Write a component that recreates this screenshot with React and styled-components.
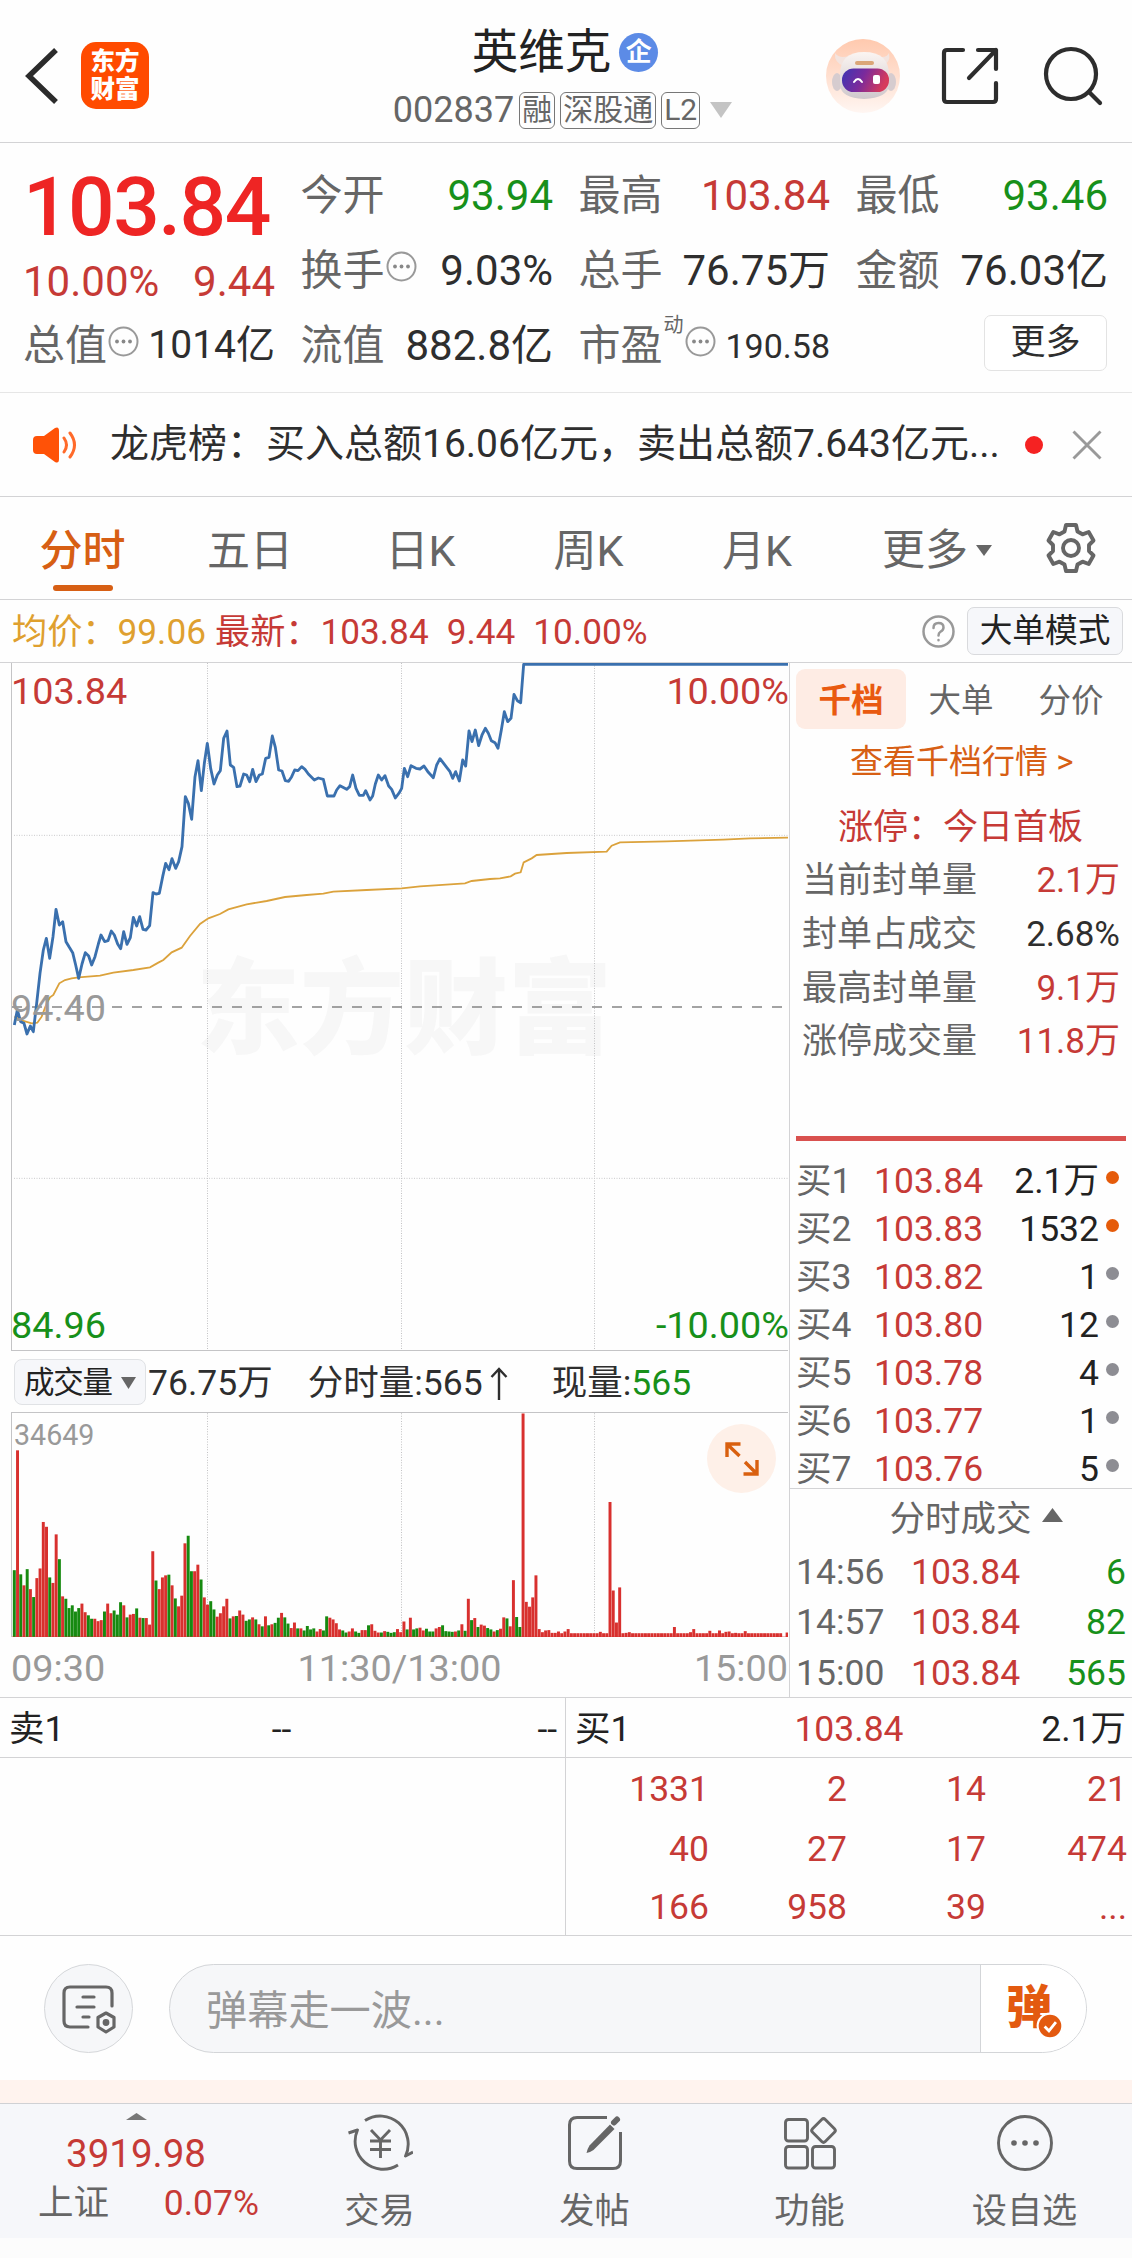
import React from "react";
import styled, { createGlobalStyle } from "styled-components";

const RED = "#c63a36";
const GREEN = "#17901a";
const GRAY = "#666";
const DARK = "#2e2e2e";
const ORANGE = "#d75f14";
const LINE = "#d3d3d5";

const Global = createGlobalStyle`
  * { box-sizing: border-box; }
  body {
    margin: 0;
    background: #fdfdfd;
    font-family: Roboto, "Noto Sans CJK SC", sans-serif;
    color: ${DARK};
  }
`;

const Page = styled.div`
  width: 1132px;
  height: 2258px;
  overflow: hidden;
  background: #fefefe;
  display: flex;
  flex-direction: column;
  font-size: 35.5px;
  line-height: 1;
  white-space: nowrap;
`;

/* ---------- header ---------- */
const Header = styled.header`
  height: 143px;
  border-bottom: 1px solid ${LINE};
  display: grid;
  grid-template-columns: 320px 1fr 320px;
  flex: none;
`;
const HeaderLeft = styled.div`
  display: flex;
  align-items: center;
  gap: 22px;
  padding: 9px 0 0 25px;
`;
const Logo = styled.div`
  width: 68px;
  height: 67px;
  border-radius: 15px;
  background: #ff4b00;
  color: #fff;
  font-weight: 900;
  font-size: 24.5px;
  line-height: 28px;
  text-align: center;
  padding-top: 6px;
  white-space: normal;
  margin-left: 1px;
`;
const HeaderMid = styled.div`
  display: flex;
  flex-direction: column;
  align-items: center;
  padding-top: 24px;
`;
const Title = styled.div`
  display: flex;
  align-items: center;
  gap: 8px;
  height: 56px;
  font-size: 46.5px;
  color: #222;
  padding-right: 2px;
`;
const CorpBadge = styled.span`
  width: 39px;
  height: 39px;
  border-radius: 50%;
  background: #5c8be6;
  color: #fff;
  font-size: 26px;
  font-weight: 700;
  line-height: 38px;
  text-align: center;
`;
const CodeLine = styled.div`
  display: flex;
  align-items: center;
  gap: 5px;
  height: 60px;
  font-size: 36px;
  color: ${GRAY};
  padding-right: 7px;
`;
const Tag = styled.span`
  height: 37px;
  border: 1.5px solid #777;
  border-radius: 6px;
  font-size: 30px;
  line-height: 33px;
  padding: 0 2px;
`;
const HeaderRight = styled.div`
  display: flex;
  align-items: center;
  padding: 9px 0 0 14px;
`;

/* ---------- quote ---------- */
const Quote = styled.section`
  height: 250px;
  border-bottom: 1px solid #e6e6e6;
  padding: 15px 0 0 23px;
  display: grid;
  grid-template-columns: 252px 252.5px 251.5px 252.5px;
  grid-template-rows: 75px 75px 75px;
  column-gap: 25.5px;
  font-size: 42px;
  flex: none;
`;
const PriceBlock = styled.div`
  grid-row: span 2;
`;
const BigPrice = styled.div`
  font-size: 82px;
  line-height: 98px;
  font-weight: 500;
  letter-spacing: -1.5px;
  color: #ee2524;
`;
const Between = styled.div`
  display: flex;
  justify-content: space-between;
  align-items: center;
  line-height: 52px;
  color: ${(p) => p.$c || DARK};
`;
const Cell = styled.div`
  display: flex;
  align-items: center;
  justify-content: space-between;
`;
const CellLabel = styled.span`
  display: flex;
  align-items: center;
  color: ${GRAY};
  gap: 1px;
`;
const CellValue = styled.span`
  color: ${(p) => p.$c || DARK};
  font-size: ${(p) => p.$size || 42}px;
`;
const Sup = styled.span`
  font-size: 20px;
  align-self: flex-start;
  margin-top: -10px;
`;
const MoreButton = styled.button`
  width: 123px;
  height: 56px;
  margin: 0 1px 6px auto;
  background: #fff;
  border: 1.5px solid #e3e3e3;
  border-radius: 7px;
  font: inherit;
  font-size: 35px;
  line-height: 51px;
  padding: 0;
  color: ${DARK};
`;

/* ---------- notice ---------- */
const Notice = styled.section`
  height: 104px;
  border-bottom: 1px solid ${LINE};
  display: flex;
  align-items: center;
  padding: 0 30px 0 33px;
  font-size: 39px;
  flex: none;
`;
const NoticeText = styled.span`
  margin-left: 32px;
  flex: 1;
`;
const RedDot = styled.span`
  width: 18px;
  height: 18px;
  border-radius: 50%;
  background: #f52222;
  margin-right: 29px;
`;

/* ---------- period tabs ---------- */
const Tabs = styled.nav`
  height: 103px;
  border-bottom: 1px solid ${LINE};
  display: flex;
  font-size: 43px;
  color: ${GRAY};
  flex: none;
`;
const Tab = styled.div`
  width: ${(p) => p.$w}px;
  display: flex;
  flex-direction: column;
  align-items: center;
  padding-top: 24px;
  line-height: 60px;
  color: ${(p) => (p.$on ? ORANGE : GRAY)};
  font-weight: ${(p) => (p.$on ? 500 : 400)};
`;
const TabLine = styled.span`
  width: 60px;
  height: 6px;
  margin-top: 4px;
  border-radius: 3px;
  background: ${ORANGE};
`;
const MoreTab = styled.div`
  display: flex;
  align-items: center;
  gap: 8px;
  margin-left: 39px;
  width: 163px;
  height: 106px;
`;

/* ---------- info line ---------- */
const Info = styled.div`
  height: 62px;
  display: flex;
  align-items: center;
  padding: 0 9px 0 12px;
  color: ${RED};
  font-size: 35.2px;
  flex: none;
`;
const InfoText = styled.div`
  padding-top: 3px;
`;
const Avg = styled.span`
  color: #dfa02f;
  margin-right: 9px;
`;
const Gap = styled.span`
  margin-left: 18px;
`;
const ModeButton = styled.button`
  width: 156px;
  height: 48px;
  border: 1.5px solid #d9dadd;
  border-radius: 7px;
  background: #f6f7fa;
  font: inherit;
  font-size: 32.7px;
  line-height: 44px;
  padding: 0;
  color: #222;
  margin-left: 12px;
`;
const Push = styled.span`
  margin-left: auto;
  display: flex;
`;

/* ---------- main ---------- */
const Main = styled.section`
  height: 1035px;
  border-top: 1px solid ${LINE};
  display: flex;
  flex: none;
`;
const ChartCol = styled.div`
  width: 789px;
  padding-left: 11px;
  display: flex;
  flex-direction: column;
`;
const Plot = styled.div`
  position: relative;
  width: 777px;
  height: ${(p) => p.$h}px;
  flex: none;
  border-left: 1px solid #c4c4c6;
  border-top: ${(p) => (p.$top ? "1px solid #c4c4c6" : "0")};
  border-bottom: ${(p) => (p.$top ? "0" : "1px solid #c4c4c6")};
  svg { display: block; }
`;
const PlotLabel = styled.span`
  position: absolute;
  font-size: ${(p) => p.$size || 37.8}px;
  line-height: 40px;
  color: ${(p) => p.$c};
  top: ${(p) => p.$y}px;
  left: ${(p) => (p.$right ? "auto" : (p.$x || -1) + "px")};
  right: ${(p) => (p.$right ? "-1px" : "auto")};
`;
const Watermark = styled.span`
  position: absolute;
  left: 184px;
  top: 283px;
  font-size: 104px;
  line-height: 130px;
  font-weight: 900;
  color: #f7f7f7;
`;
const VolumeBar = styled.div`
  height: 61px;
  flex: none;
  display: flex;
  align-items: center;
  padding-left: 3px;
`;
const VolumeSelect = styled.button`
  width: 132px;
  height: 46px;
  border: 1.5px solid #e0e2e5;
  border-radius: 8px;
  background: #f6f7fa;
  font: inherit;
  font-size: 30.5px;
  letter-spacing: -1.3px;
  line-height: 40px;
  color: #222;
  padding: 2px 9px 0 9px;
  display: flex;
  align-items: center;
  justify-content: space-between;
  margin-right: 2px;
`;
const Field = styled.span`
  margin-left: ${(p) => p.$ml || 0}px;
  padding-top: ${(p) => p.$pt || 0}px;
  display: flex;
  align-items: center;
`;
const Green = styled.span`
  color: ${GREEN};
`;
const ExpandButton = styled.button`
  position: absolute;
  left: 695px;
  top: 11px;
  width: 69px;
  height: 69px;
  border: 0;
  padding: 0;
  border-radius: 50%;
  background: #fef0e8;
  display: flex;
  align-items: center;
  justify-content: center;
`;
const Axis = styled.div`
  width: 777px;
  height: 60px;
  display: flex;
  justify-content: space-between;
  line-height: 62px;
  font-size: 37.8px;
  color: #999;
`;

/* ---------- side panel ---------- */
const Side = styled.aside`
  flex: 1;
  border-left: 1px solid ${LINE};
  display: flex;
  flex-direction: column;
`;
const SideTabs = styled.div`
  display: grid;
  grid-template-columns: 110px 110px 110px;
  margin: 6px 0 0 6px;
`;
const SideTab = styled.div`
  height: 60px;
  line-height: 64px;
  font-size: 32.5px;
  text-align: center;
  border-radius: 9px;
  color: ${(p) => (p.$on ? "#e95a10" : GRAY)};
  font-weight: ${(p) => (p.$on ? 700 : 400)};
  background: ${(p) => (p.$on ? "#feece4" : "transparent")};
`;
const DepthLink = styled.div`
  height: 64px;
  line-height: 65px;
  font-size: 33px;
  color: ${ORANGE};
  padding-left: 60px;
`;
const LimitTitle = styled.div`
  height: 59px;
  line-height: 69px;
  font-size: 35px;
  color: ${RED};
  padding-left: 48px;
`;
const StatRow = styled.div`
  height: 54px;
  display: flex;
  align-items: center;
  justify-content: space-between;
  padding: 4px 12px 0 12px;
  font-size: 35px;
  color: ${GRAY};
`;
const StatValue = styled.span`
  color: ${(p) => (p.$dark ? DARK : RED)};
`;
const SellBar = styled.div`
  height: 6px;
  background: #d9514f;
  margin: 69px 6px 14px 6px;
`;
const BidRow = styled.div`
  height: 48px;
  display: grid;
  grid-template-columns: 78px 110px 1fr 33px;
  align-items: center;
  padding: 4px 0 0 6px;
  color: ${GRAY};
`;
const Price = styled.span`
  color: ${RED};
`;
const Right = styled.span`
  text-align: right;
  color: ${(p) => p.$c || "#222"};
`;
const Dot = styled.span`
  width: 13px;
  height: 13px;
  border-radius: 50%;
  margin: -7px 0 0 7px;
  background: ${(p) => (p.$hot ? "#e55b0a" : "#8d8d93")};
`;
const BidList = styled.div`
  height: 333px;
`;
const TickTitle = styled.div`
  height: 57px;
  border-top: 1px solid ${LINE};
  display: flex;
  align-items: center;
  justify-content: center;
  gap: 10px;
  color: ${GRAY};
  padding: 4px 0 0 30px;
  svg { margin-top: -9px; }
`;
const TickRow = styled.div`
  height: 51px;
  display: grid;
  grid-template-columns: 115px 110px 1fr;
  align-items: center;
  padding: 4px 6px 0 6px;
  color: ${GRAY};
`;

/* ---------- order queue ---------- */
const Queue = styled.section`
  height: 239px;
  border-top: 1px solid ${LINE};
  border-bottom: 1px solid ${LINE};
  display: grid;
  grid-template-columns: 565px 567px;
  grid-template-rows: 237px;
  flex: none;
`;
const QueueSide = styled.div`
  border-left: ${(p) => (p.$line ? `1px solid ${LINE}` : "0")};
`;
const QueueHead = styled.div`
  height: 60px;
  border-bottom: 1px solid ${LINE};
  display: grid;
  grid-template-columns: 1fr 1fr 1fr;
  align-items: center;
  padding: 5px ${(p) => p.$pr || 6}px 0 9px;
  color: #222;
`;
const Center = styled.span`
  text-align: center;
  color: ${(p) => p.$c || "#222"};
  margin-left: -3px;
`;
const QueueGrid = styled.div`
  display: grid;
  grid-template-columns: 143px 138px 139px 141px;
  grid-template-rows: 60px 59.5px 57px;
  align-items: center;
  text-align: right;
  color: ${RED};
  padding-top: 2px;
  height: 177px;
`;

/* ---------- comment bar ---------- */
const Comment = styled.section`
  height: 144px;
  padding: 28px 45px 0 44px;
  display: flex;
  gap: 36px;
  flex: none;
`;
const RoundButton = styled.button`
  width: 89px;
  height: 89px;
  border-radius: 50%;
  border: 1.5px solid #d5d7da;
  background: #f6f7f9;
  padding: 0;
  display: flex;
  align-items: center;
  justify-content: center;
`;
const InputBox = styled.div`
  flex: 1;
  height: 89px;
  border: 1.5px solid #d3d5d8;
  border-radius: 45px;
  background: #f6f7f9;
  overflow: hidden;
  display: flex;
`;
const Placeholder = styled.span`
  flex: 1;
  padding-left: 36px;
  font-size: 41.2px;
  line-height: 93px;
  color: #999;
`;
const Danmu = styled.div`
  position: relative;
  width: 106px;
  border-left: 1.5px solid #d3d5d8;
  background: #fff;
  color: #e35a10;
  font-size: 46px;
  font-weight: 900;
  line-height: 85px;
  padding-left: 25px;
  svg { position: absolute; left: 55px; top: 47px; }
`;
const Band = styled.div`
  height: 24px;
  background: #fff3ee;
  border-bottom: 1px solid #d0d1d4;
  flex: none;
`;

/* ---------- bottom nav ---------- */
const Bottom = styled.footer`
  height: 134px;
  background: #f6f7fa;
  display: grid;
  grid-template-columns: 272px 215px 215px 215px 215px;
  color: ${GRAY};
  font-size: 35.2px;
  flex: none;
`;
const IndexBox = styled.div`
  display: flex;
  flex-direction: column;
  align-items: center;
  padding-top: 9px;
`;
const IndexValue = styled.div`
  font-size: 38.5px;
  color: ${RED};
  line-height: 50px;
  margin-top: 9px;
`;
const IndexRow = styled.div`
  display: flex;
  justify-content: space-between;
  width: 221px;
  line-height: 49px;
  font-size: 35.5px;
  margin-left: 25px;
`;
const NavItem = styled.div`
  display: flex;
  flex-direction: column;
  align-items: center;
  padding-top: 9px;
  line-height: 40px;
  svg { margin-bottom: 18px; display: block; }
`;
const Tail = styled.div`
  flex: 1;
  background: #fcfcfc;
`;

/* ---------- icons ---------- */
const Triangle = ({ w, h, up, fill = "#666" }) => (
  <svg width={w} height={h} viewBox="0 0 10 10" preserveAspectRatio="none">
    <path d={up ? "M0 10L5 0L10 10Z" : "M0 0H10L5 10Z"} fill={fill} />
  </svg>
);

const MoreDots = styled.svg`
  margin-top: -8px;
`;
const Dots = () => (
  <MoreDots width="31" height="31" viewBox="0 0 31 31">
    <circle cx="15.5" cy="15.5" r="14" fill="none" stroke="#999" strokeWidth="2" />
    {[9, 15.5, 22].map((x) => (
      <circle key={x} cx={x} cy="15.5" r="1.9" fill="#888" />
    ))}
  </MoreDots>
);

const Robot = () => (
  <svg width="74" height="74" viewBox="0 0 74 74">
    <defs>
      <linearGradient id="halo" x1="0" y1="0" x2="0" y2="1">
        <stop offset="0" stopColor="#ffc9ae" />
        <stop offset="1" stopColor="#fff6f2" />
      </linearGradient>
      <linearGradient id="visor" x1="0" y1="0" x2="1" y2="0.25">
        <stop offset="0" stopColor="#3b36b4" />
        <stop offset="0.5" stopColor="#7a2a9c" />
        <stop offset="1" stopColor="#d63a5c" />
      </linearGradient>
      <linearGradient id="shell" x1="0" y1="0" x2="0" y2="1">
        <stop offset="0" stopColor="#fbf5f2" />
        <stop offset="1" stopColor="#cfc8cc" />
      </linearGradient>
    </defs>
    <circle cx="37" cy="37" r="37" fill="url(#halo)" />
    <path d="M9 14Q8 24 18 27L23 17Q13 20 9 14ZM63 14Q65 24 56 27L51 17Q60 20 63 14Z" fill="#f3e4df" />
    <ellipse cx="11" cy="43" rx="5" ry="9" fill="#d6cccf" />
    <ellipse cx="65" cy="43" rx="5" ry="9" fill="#d6cccf" />
    <path d="M14 36Q14 13 38 13Q63 13 63 36V46Q62 59 38 60Q15 59 14 46Z" fill="url(#shell)" />
    <rect x="29" y="22" width="19" height="4" rx="2" fill="#dba678" />
    <rect x="16" y="29.500" width="47" height="23.500" rx="11.500" fill="url(#visor)" />
    <path d="M28 43Q32 37 36 43" fill="none" stroke="#fff" strokeWidth="2" strokeLinecap="round" />
    <rect x="47" y="36" width="7" height="9" rx="2" fill="#fff" />
  </svg>
);

const ICON = { fill: "none", stroke: "#2d2d2d", strokeLinecap: "round", strokeLinejoin: "round" };

const HeaderIcon = styled.svg`
  margin-left: ${(p) => p.$ml}px;
`;

const Share = () => (
  <HeaderIcon $ml={41} width="58" height="58" viewBox="0 0 58 58" {...ICON} strokeWidth="4.200">
    <path d="M22 3H6Q3 3 3 6V52Q3 55 6 55H52Q55 55 55 52V36M37 3H55V22M55 3L28 31" />
  </HeaderIcon>
);

const Search = () => (
  <HeaderIcon $ml={44} width="60" height="60" viewBox="0 0 60 60" {...ICON} strokeWidth="4.200">
    <circle cx="28" cy="28" r="25" />
    <path d="M46 46L57 57" />
  </HeaderIcon>
);

const Speaker = () => (
  <svg width="45" height="36" viewBox="0 0 45 36">
    <path d="M4 9H11L22 1Q26 -1 26 4V32Q26 37 22 35L11 27H4Q0 27 0 23V13Q0 9 4 9Z" fill="#ff5207" />
    <path d="M31 11Q36 18 31 25M37 6Q46 18 37 30" fill="none" stroke="#ff6a2a" strokeWidth="3" strokeLinecap="round" />
  </svg>
);

const Close = () => (
  <svg width="30" height="30" viewBox="0 0 30 30">
    <path d="M1.500 1.500L28.500 28.500M28.500 1.500L1.500 28.500" stroke="#999" strokeWidth="2.900" />
  </svg>
);

const Gear = () => (
  <svg width="52" height="52" viewBox="0 0 52 52" fill="none" stroke="#666" strokeWidth="3.900" strokeLinejoin="round">
    <path d="M21 3H31L32.500 9.500L37.500 12.300L43.700 10L48.500 18.500L44 23V29L48.500 33.500L43.700 42L37.500 39.700L32.500 42.500L31 49H21L19.500 42.500L14.500 39.700L8.300 42L3.500 33.500L8 29V23L3.500 18.500L8.300 10L14.500 12.300L19.500 9.500Z" />
    <circle cx="26" cy="26" r="8" />
  </svg>
);

const Help = () => (
  <svg width="33" height="33" viewBox="0 0 33 33" fill="none" stroke="#999" strokeWidth="2.500" strokeLinecap="round">
    <circle cx="16.500" cy="16.500" r="15" />
    <path d="M11.500 13Q11.500 8 16.500 8Q21.500 8 21.500 12.500Q21.500 15 18.500 16.800Q16.500 18 16.500 20.500M16.500 25V25.200" />
  </svg>
);

const Expand = () => (
  <svg width="34" height="34" viewBox="0 0 34 34" fill="none" stroke="#d9600f" strokeWidth="3.400">
    <path d="M2 15V2H15.500M2 2L14.500 14M32 18V32H18.500M32 32L20 20" />
  </svg>
);

const ArrowSvg = styled.svg`
  margin: 0 2px 0 7px;
`;
const UpArrow = () => (
  <ArrowSvg width="18" height="34" viewBox="0 0 18 34" fill="none" stroke="#2e2e2e" strokeWidth="2.400">
    <path d="M9 33V2M1.500 10L9 2L16.500 10" />
  </ArrowSvg>
);

const NoteGear = () => (
  <svg width="56" height="50" viewBox="0 0 56 50" fill="none" stroke="#666" strokeWidth="3.200" strokeLinecap="round">
    <path d="M51 22V9Q51 3 45 3H9Q3 3 3 9V37Q3 43 9 43H27" />
    <path d="M22 13H33M16 23H33M22 33H28" />
    <path d="M45 29L53 33.500V43L45 48L37 43V33.500Z" strokeLinejoin="round" />
    <circle cx="45" cy="38.500" r="1.800" fill="#666" />
  </svg>
);

const CheckBadge = () => (
  <svg width="28" height="28" viewBox="0 0 26 26">
    <circle cx="13" cy="13" r="11.500" fill="#e35a10" stroke="#fff" strokeWidth="2" />
    <path d="M8 13.500L12 17.500L18.500 9.500" fill="none" stroke="#fff" strokeWidth="2.600" />
  </svg>
);

const Trade = () => (
  <svg width="66" height="60" viewBox="0 0 66 60" fill="none" stroke="#666" strokeWidth="2.900">
    <path d="M18 7.500A28 28 0 0 1 58.500 43L66 39M51 52A28 28 0 0 1 10.500 17L1.500 20" strokeLinejoin="round" />
    <path d="M24 17L33.500 27L43 17M33.500 27V45M23 28H44M23 36.500H44" />
  </svg>
);

const Post = () => (
  <svg width="60" height="60" viewBox="0 0 60 60" fill="none" stroke="#666" strokeWidth="3">
    <path d="M42 4.500H12Q4.500 4.500 4.500 12V48Q4.500 55.500 12 55.500H48Q55.500 55.500 55.500 48V19" />
    <path d="M45 11.500L49.500 16L28.500 37Q25 39.500 21.500 40Q22 36.500 24.500 32.500Z" fill="#666" stroke="none" />
    <path d="M49 9.500L52 6.500" strokeWidth="6" strokeLinecap="round" />
  </svg>
);

const Functions = () => (
  <svg width="60" height="60" viewBox="0 0 60 60" fill="none" stroke="#666" strokeWidth="2.900" strokeLinejoin="round">
    <rect x="5.500" y="6.500" width="22" height="21.500" rx="3" />
    <rect x="5.500" y="33.500" width="22" height="21.500" rx="3" />
    <rect x="32.500" y="33.500" width="22" height="21.500" rx="3" />
    <rect x="34.500" y="8.500" width="18" height="18" rx="2.500" transform="rotate(45 43.500 17.500)" />
  </svg>
);

const MoreCircle = () => (
  <svg width="60" height="60" viewBox="0 0 60 60">
    <circle cx="30" cy="30" r="26.500" fill="none" stroke="#666" strokeWidth="2.900" />
    {[19, 30, 41].map((x) => (
      <circle key={x} cx={x} cy="30" r="2.800" fill="#666" />
    ))}
  </svg>
);

/* ---------- chart data ---------- */
const PRICE_LINE =
  "43,1095 52,1050 62,1085 72,1090 81,1122 91,1098 100,1115 110,1030 120,940 130,870 139,835 149,895 159,830 168,748 178,795 188,785 198,845 208,862 218,878 227,915 236,955 246,912 256,878 266,888 275,915 285,890 295,852 303,825 314,845 324,842 334,813 343,825 353,852 362,866 371,815 381,853 391,833 400,772 410,798 419,770 429,808 438,810 449,797 459,698 468,702 478,700 488,650 497,610 507,629 516,596 527,625 536,605 546,560 556,410 565,430 575,478 585,350 594,302 604,392 613,310 622,250 632,325 642,372 652,345 661,332 671,235 681,213 691,315 701,322 711,380 720,378 731,342 740,345 749,365 758,328 768,365 778,345 787,342 797,295 807,292 817,228 826,262 836,330 846,333 856,362 866,364 875,350 884,330 894,332 905,320 915,328 925,342 943,360 955,354 970,358 982,408 1002,408 1010,390 1020,377 1040,388 1049,380 1058,345 1068,385 1078,406 1090,406 1097,392 1110,420 1118,408 1126,372 1135,345 1145,360 1155,347 1166,378 1175,388 1186,414 1198,398 1205,385 1213,325 1223,350 1233,317 1248,325 1260,327 1272,318 1285,337 1300,353 1310,315 1320,296 1340,322 1350,335 1358,355 1367,335 1378,363 1388,300 1397,318 1407,213 1416,245 1426,210 1436,257 1446,225 1456,205 1465,220 1474,242 1485,248 1494,265 1504,210 1513,155 1523,185 1533,175 1542,103 1552,122 1562,128 1571,13 2364,13";

const AVERAGE_LINE =
  "43,1070 70,1083 95,1090 112,1088 125,1070 140,1030 150,1012 160,1005 178,970 195,960 215,955 236,952 300,947 340,938 400,930 450,922 475,908 490,900 515,877 545,863 570,828 600,792 625,775 660,762 685,748 740,733 800,723 855,711 920,705 970,701 1000,695 1100,690 1205,685 1260,679 1395,670 1415,663 1470,657 1500,655 1532,649 1545,641 1562,637 1571,607 1595,595 1610,585 1700,579 1820,575 1835,557 1860,547 2000,544 2170,539 2250,535 2364,533";

/* One entry per minute: g = down, r = up, followed by the bar height. */
const MORNING =
  "g194 r542 g182 r150 g197 r139 g116 r171 r199 r334 r320 g173 r157 r298 g226 r118 g111 g84 g92 g74 g84 r97 r72 g63 g53 r53 r46 r49 g74 r97 r69 g77 g65 g101 r92 g57 r65 r67 g83 r56 g55 r55 r36 r249 g164 r139 r173 r179 g181 r150 g112 r89 r120 r272 g294 g191 r191 r210 g167 r115 r94 g104 g80 r59 r69 r89 r111 g54 r60 g61 r77 r65 g47 g51 r57 g51 r37 g31 r60 g34 r37 g41 g56 r70 g57 g39 r26 r42 g25 r25 g19 g32 g22 g25 r16 r23 g19 g60 r56 r51 r40 r22 g19 g13 r16 r25 g16 g12 r20 r20 g34 r37 r18 r13 g13 r17 g15 g12 g14 r23";
const AFTERNOON =
  "r14 r45 g22 r56 g22 g25 r27 r19 g24 g16 g16 r25 r29 g34 g17 g16 g15 r16 g19 r37 g18 r111 g49 r55 g29 r36 r33 g26 g22 r16 g20 r24 r57 g54 r31 r165 g58 g29 r649 r102 r88 r115 r179 r23 r14 r19 r20 r12 r12 r16 r11 r16 r23 r11 r11 r11 r11 r11 r11 r11 r11 r11 r15 r11 r11 r392 r135 r42 r144 r11 r12 r14 r11 r11 r11 r11 r11 r11 r11 r11 r11 r11 r11 r11 r11 r29 r11 r11 r11 r11 r14 r23 r11 r11 r11 r11 r18 r11 r11 r19 r11 r15 r16 r11 r12 r11 r11 r17 r11 r11 r11 r11 r11 r11 r11 r11 r11 r11 r11 r0 r13";
const VOLUMES = `${MORNING} ${AFTERNOON}`.split(" ").map((v) => ({ up: v[0] === "r", h: +v.slice(1) }));
const PITCH = 9.66;

const GridV = ({ y1, y2 }) =>
  [622.5, 1204.5, 1783.5].map((x) => (
    <line key={x} x1={x} x2={x} y1={y1} y2={y2} stroke="#c2c2c4" strokeWidth="3" strokeDasharray="3 4.5" />
  ));

const ChartSvg = styled.svg`
  position: relative;
`;

const PriceChart = () => (
  <ChartSvg width="776" height="687" viewBox="36 9 2328 2061">
    <GridV y1={9} y2={2070} />
    {[526, 1555].map((y) => (
      <line key={y} x1="42" x2="2364" y1={y} y2={y} stroke="#cacacc" strokeWidth="3" strokeDasharray="3 4.5" />
    ))}
    <line x1="36" x2="2346" y1="1041" y2="1041" stroke="#858585" strokeWidth="5" strokeDasharray="30 30" />
    <polyline points={AVERAGE_LINE} fill="none" stroke="#dba23c" strokeWidth="5.500" />
    <polyline points={PRICE_LINE} fill="none" stroke="#3a70ae" strokeWidth="8.500" strokeLinejoin="round" />
  </ChartSvg>
);

const VolumeChart = () => (
  <svg width="776" height="224" viewBox="36 734.600 2328 650.400" preserveAspectRatio="none">
    <GridV y1={735} y2={1385} />
    {VOLUMES.map((v, i) => (
      <rect
        key={i}
        x={38.5 + i * PITCH}
        y={1385 - v.h}
        width={PITCH - 0.8}
        height={v.h}
        fill={v.up ? "#d8302e" : "#168a10"}
      />
    ))}
    <line x1="36" x2="2364" y1="1383.500" y2="1383.500" stroke="#d8302e" strokeWidth="2" opacity="0.5" />
  </svg>
);

const PERIODS = [
  ["分时", 165],
  ["五日", 170],
  ["日K", 171],
  ["周K", 165],
  ["月K", 172],
];
const STATS = [
  ["当前封单量", "2.1万"],
  ["封单占成交", "2.68%"],
  ["最高封单量", "9.1万"],
  ["涨停成交量", "11.8万"],
];
const BIDS = [
  ["103.84", "2.1万"],
  ["103.83", "1532"],
  ["103.82", "1"],
  ["103.80", "12"],
  ["103.78", "4"],
  ["103.77", "1"],
  ["103.76", "5"],
];
const TICKS = [
  ["14:56", "103.84", "6"],
  ["14:57", "103.84", "82"],
  ["15:00", "103.84", "565"],
];
const ORDERS = ["1331", "2", "14", "21", "40", "27", "17", "474", "166", "958", "39", "..."];
const NAV = [
  ["交易", Trade],
  ["发帖", Post],
  ["功能", Functions],
  ["设自选", MoreCircle],
];

export default function App() {
  return (
    <Page>
      <Global />
      <Header>
        <HeaderLeft>
          <svg width="33" height="56" viewBox="0 0 33 56" fill="none" stroke="#2b2b2b" strokeWidth="5.500">
            <path d="M31 2L4 28L31 54" />
          </svg>
          <Logo>东方<br />财富</Logo>
        </HeaderLeft>
        <HeaderMid>
          <Title>英维克<CorpBadge>企</CorpBadge></Title>
          <CodeLine>
            002837<Tag>融</Tag><Tag>深股通</Tag><Tag>L2</Tag>
            <Field $ml={5}><Triangle w={22} h={16} fill="#c4c4c4" /></Field>
          </CodeLine>
        </HeaderMid>
        <HeaderRight><Robot /><Share /><Search /></HeaderRight>
      </Header>

      <Quote>
        <PriceBlock>
          <BigPrice>103.84</BigPrice>
          <Between $c={RED}><span>10.00%</span><span>9.44</span></Between>
        </PriceBlock>
        <Cell><CellLabel>今开</CellLabel><CellValue $c={GREEN}>93.94</CellValue></Cell>
        <Cell><CellLabel>最高</CellLabel><CellValue $c={RED}>103.84</CellValue></Cell>
        <Cell><CellLabel>最低</CellLabel><CellValue $c={GREEN}>93.46</CellValue></Cell>
        <Cell><CellLabel>换手<Dots /></CellLabel><CellValue>9.03%</CellValue></Cell>
        <Cell><CellLabel>总手</CellLabel><CellValue>76.75万</CellValue></Cell>
        <Cell><CellLabel>金额</CellLabel><CellValue>76.03亿</CellValue></Cell>
        <Cell><CellLabel>总值<Dots /></CellLabel><CellValue $size={39}>1014亿</CellValue></Cell>
        <Cell><CellLabel>流值</CellLabel><CellValue>882.8亿</CellValue></Cell>
        <Cell><CellLabel>市盈<Sup>动</Sup><Dots /></CellLabel><CellValue $size={34}>190.58</CellValue></Cell>
        <Cell><MoreButton>更多</MoreButton></Cell>
      </Quote>

      <Notice>
        <Speaker />
        <NoticeText>龙虎榜：买入总额16.06亿元，卖出总额7.643亿元...</NoticeText>
        <RedDot />
        <Close />
      </Notice>

      <Tabs>
        {PERIODS.map(([t, w], i) => (
          <Tab key={t} $w={w} $on={i === 0}>{t}{i === 0 && <TabLine />}</Tab>
        ))}
        <MoreTab>更多<Triangle w={16} h={11} /></MoreTab>
        <Field><Gear /></Field>
      </Tabs>

      <Info>
        <InfoText>
          <Avg>均价：99.06</Avg>最新：103.84<Gap>9.44</Gap><Gap>10.00%</Gap>
        </InfoText>
        <Push><Help /></Push>
        <ModeButton>大单模式</ModeButton>
      </Info>

      <Main>
        <ChartCol>
          <Plot $h={688}>
            <Watermark>东方财富</Watermark>
            <PriceChart />
            <PlotLabel $c={RED} $y={8}>103.84</PlotLabel>
            <PlotLabel $c={RED} $y={8} $right>10.00%</PlotLabel>
            <PlotLabel $c="#999" $y={325}>94.40</PlotLabel>
            <PlotLabel $c={GREEN} $y={642}>84.96</PlotLabel>
            <PlotLabel $c={GREEN} $y={642} $right>-10.00%</PlotLabel>
          </Plot>
          <VolumeBar>
            <VolumeSelect>成交量<Triangle w={15} h={12} /></VolumeSelect>
            <Field $pt={4}>76.75万</Field>
            <Field $ml={35} $pt={4}>分时量:565<UpArrow /></Field>
            <Field $ml={42} $pt={4}>现量:<Green>565</Green></Field>
          </VolumeBar>
          <Plot $h={225} $top>
            <VolumeChart />
            <PlotLabel $c="#999" $size={28.6} $x={2} $y={2}>34649</PlotLabel>
            <ExpandButton><Expand /></ExpandButton>
          </Plot>
          <Axis><span>09:30</span><span>11:30/13:00</span><span>15:00</span></Axis>
        </ChartCol>

        <Side>
          <SideTabs>
            <SideTab $on>千档</SideTab><SideTab>大单</SideTab><SideTab>分价</SideTab>
          </SideTabs>
          <DepthLink>查看千档行情 &gt;</DepthLink>
          <LimitTitle>涨停：今日首板</LimitTitle>
          {STATS.map(([k, v], i) => (
            <StatRow key={k}>{k}<StatValue $dark={i === 1}>{v}</StatValue></StatRow>
          ))}
          <SellBar />
          <BidList>
            {BIDS.map(([p, v], i) => (
              <BidRow key={p}>
                <span>买{i + 1}</span><Price>{p}</Price><Right>{v}</Right><Dot $hot={i < 2} />
              </BidRow>
            ))}
          </BidList>
          <TickTitle>分时成交<Triangle w={21} h={14} up /></TickTitle>
          {TICKS.map(([t, p, v]) => (
            <TickRow key={t}><span>{t}</span><Price>{p}</Price><Right $c={GREEN}>{v}</Right></TickRow>
          ))}
        </Side>
      </Main>

      <Queue>
        <QueueSide>
          <QueueHead $pr={8}><span>卖1</span><Center>--</Center><Right>--</Right></QueueHead>
        </QueueSide>
        <QueueSide $line>
          <QueueHead><span>买1</span><Center $c={RED}>103.84</Center><Right>2.1万</Right></QueueHead>
          <QueueGrid>{ORDERS.map((o) => <span key={o}>{o}</span>)}</QueueGrid>
        </QueueSide>
      </Queue>

      <Comment>
        <RoundButton><NoteGear /></RoundButton>
        <InputBox>
          <Placeholder>弹幕走一波...</Placeholder>
          <Danmu>弹<CheckBadge /></Danmu>
        </InputBox>
      </Comment>
      <Band />

      <Bottom>
        <IndexBox>
          <Triangle w={21} h={7} up fill="#777" />
          <IndexValue>3919.98</IndexValue>
          <IndexRow><span>上证</span><Price>0.07%</Price></IndexRow>
        </IndexBox>
        {NAV.map(([t, Icon]) => (
          <NavItem key={t}><Icon />{t}</NavItem>
        ))}
      </Bottom>
      <Tail />
    </Page>
  );
}
